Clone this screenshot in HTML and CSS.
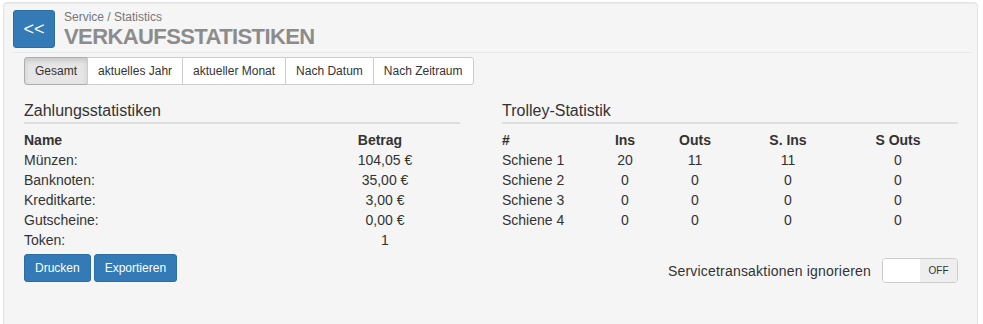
FILE: index.html
```html
<!DOCTYPE html>
<html>
<head>
    <meta charset="UTF-8">
    <title>Verkaufsstatistiken</title>
    <link rel="stylesheet" href="styles.css">
</head>
<body>
<div class="well">
    <div class="page-header">
        <button class="btn-back">&lt;&lt;</button>
        <div class="title-block">
            <div class="breadcrumb">Service / Statistics</div>
            <h1>VERKAUFSSTATISTIKEN</h1>
        </div>
    </div>

    <div class="content">
        <div class="btn-group">
            <button class="btn active">Gesamt</button>
            <button class="btn">aktuelles Jahr</button>
            <button class="btn">aktueller Monat</button>
            <button class="btn">Nach Datum</button>
            <button class="btn">Nach Zeitraum</button>
        </div>

        <div class="columns">
            <div class="col">
                <h4>Zahlungsstatistiken</h4>
                <div class="stat-table payments">
                    <div class="th">Name</div><div class="th num">Betrag</div>
                    <div>Münzen:</div><div class="num">104,05 €</div>
                    <div>Banknoten:</div><div class="num">35,00 €</div>
                    <div>Kreditkarte:</div><div class="num">3,00 €</div>
                    <div>Gutscheine:</div><div class="num">0,00 €</div>
                    <div>Token:</div><div class="num">1</div>
                </div>
                <div class="actions">
                    <button class="btn btn-primary">Drucken</button>
                    <button class="btn btn-primary">Exportieren</button>
                </div>
            </div>

            <div class="col">
                <h4>Trolley-Statistik</h4>
                <div class="stat-table trolley">
                    <div class="th">#</div><div class="th num">Ins</div><div class="th num">Outs</div><div class="th num">S. Ins</div><div class="th num">S Outs</div>
                    <div>Schiene 1</div><div class="num">20</div><div class="num">11</div><div class="num">11</div><div class="num">0</div>
                    <div>Schiene 2</div><div class="num">0</div><div class="num">0</div><div class="num">0</div><div class="num">0</div>
                    <div>Schiene 3</div><div class="num">0</div><div class="num">0</div><div class="num">0</div><div class="num">0</div>
                    <div>Schiene 4</div><div class="num">0</div><div class="num">0</div><div class="num">0</div><div class="num">0</div>
                </div>
                <div class="switch-row">
                    <span class="switch-label">Servicetransaktionen ignorieren</span>
                    <div class="switch">
                        <span class="switch-knob"></span>
                        <span class="switch-off">OFF</span>
                    </div>
                </div>
            </div>
        </div>
    </div>
</div>
</body>
</html>
```

FILE: styles.css
```css
html, body {
    margin: 0;
    overflow: hidden;
}

body {
    font-family: "Liberation Sans", Arial, sans-serif;
    font-size: 14px;
    color: #333;
    background-color: #fff;
}

.well {
    margin: 2px 5px 0 3px;
    min-height: 360px;
    background-color: #f5f5f5;
    border: 1px solid #e3e3e3;
    border-radius: 4px;
    box-shadow: inset 0 1px 1px rgba(0, 0, 0, 0.05);
}

.page-header {
    display: flex;
    align-items: flex-start;
    gap: 9px;
    margin: 0 6px 0 9px;
    padding: 7px 0 4px;
    border-bottom: 1px solid #e8e8e8;
}

.btn-back {
    width: 42px;
    height: 38px;
    padding: 0;
    font-family: inherit;
    font-size: 18px;
    color: #fff;
    background-color: #337ab7;
    border: 1px solid #2e6da4;
    border-radius: 3px;
}

.breadcrumb {
    font-size: 12px;
    line-height: 14px;
    color: #777;
}

h1 {
    margin: 1px 0 0;
    font-size: 22px;
    line-height: 23px;
    font-weight: bold;
    color: #8c8c8c;
    letter-spacing: -0.6px;
}

.content {
    padding: 4px 19px 0 20px;
}

.btn {
    font-family: inherit;
    font-size: 12px;
    line-height: 18px;
    padding: 4px 10px;
    color: #333;
    background-color: #fff;
    border: 1px solid #ccc;
    border-radius: 3px;
}

.btn-group {
    display: flex;
}

.btn-group .btn {
    border-radius: 0;
    margin-left: -1px;
}

.btn-group .btn:first-child {
    margin-left: 0;
    border-radius: 3px 0 0 3px;
}

.btn-group .btn:last-child {
    border-radius: 0 3px 3px 0;
}

.btn-group .btn.active {
    background-color: #e6e6e6;
    border-color: #adadad;
    box-shadow: inset 0 3px 5px rgba(0, 0, 0, 0.125);
}

.btn-primary {
    color: #fff;
    background-color: #337ab7;
    border-color: #2e6da4;
}

.columns {
    display: grid;
    grid-template-columns: 436px 1fr;
    column-gap: 42px;
    margin-top: 16px;
}

h4 {
    margin: 0 0 6px;
    padding-bottom: 1px;
    font-size: 16px;
    line-height: 20px;
    font-weight: normal;
    border-bottom: 2px solid #ddd;
}

.stat-table {
    display: grid;
    line-height: 20px;
}

.payments {
    grid-template-columns: 276px 1fr;
}

.payments .num:not(.th) {
    padding-left: 10px;
}

.trolley {
    grid-template-columns: 96px 54px 86px 100px 1fr;
}

.th {
    font-weight: bold;
}

.num {
    text-align: center;
}

.actions {
    display: flex;
    gap: 3px;
    margin-top: 4px;
}

.switch-row {
    display: flex;
    justify-content: flex-end;
    align-items: center;
    gap: 11px;
    margin-top: 28px;
}

.switch-label {
    letter-spacing: 0.2px;
}

.switch {
    display: flex;
    width: 74px;
    height: 23px;
    border: 1px solid #ccc;
    border-radius: 4px;
    overflow: hidden;
    background-color: #fff;
}

.switch-knob {
    width: 37px;
    background-color: #fff;
}

.switch-off {
    flex: 1;
    font-size: 10px;
    line-height: 23px;
    text-align: center;
    color: #333;
    background-color: #eee;
}
```
